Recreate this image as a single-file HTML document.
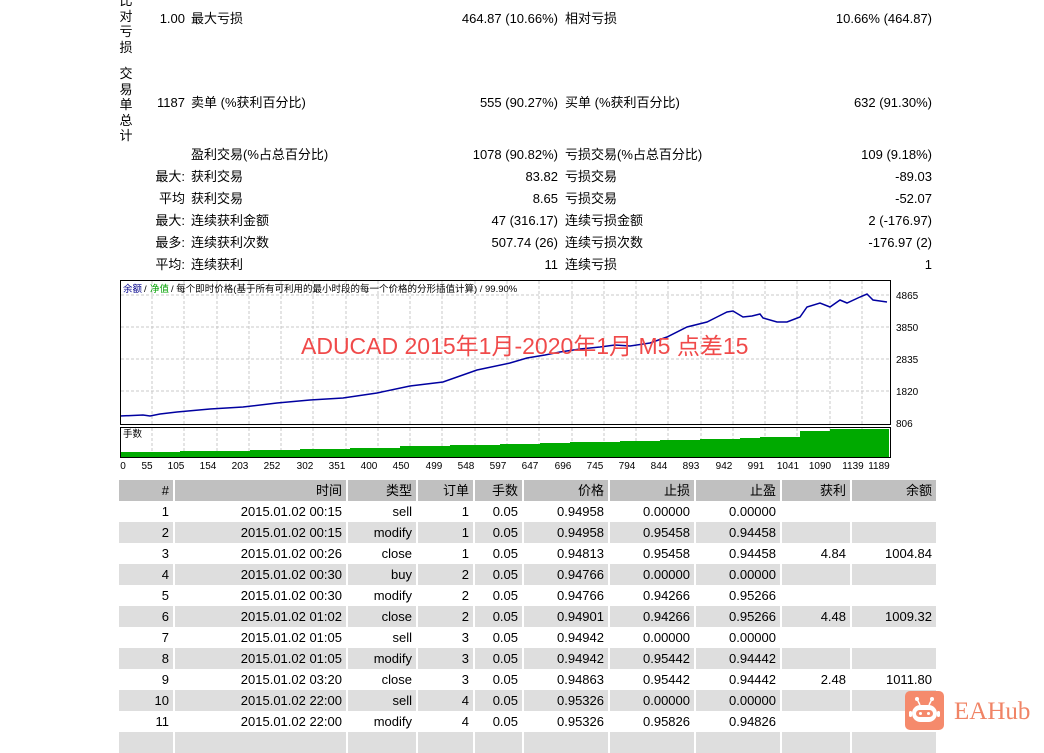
<!DOCTYPE html>
<html><head><meta charset="utf-8"><style>
body{margin:0;width:1044px;height:737px;background:#fff;overflow:hidden;position:relative;font-family:"Liberation Sans","Noto Sans CJK SC",sans-serif;font-size:13px;color:#000}
.a{position:absolute;white-space:nowrap;line-height:14px}
.r{text-align:right}
.v{position:absolute;left:118px;width:16px;line-height:15.5px;font-size:13px;text-align:center}
table{position:absolute;left:117px;top:480px;border-collapse:separate;border-spacing:2px 0;font-size:13px}
td{height:21px;padding:0 4px;text-align:right;white-space:nowrap;line-height:21px}
tr.h td{background:#c0c0c0}
tr.g td{background:#dedede}
</style></head><body>
<div class="v" style="top:-7px">比<br>对<br>亏<br>损</div>
<div class="v" style="top:66px">交<br>易<br>单<br>总<br>计</div>

<div class="a r" style="top:12px;left:130px;width:55px">1.00</div><div class="a" style="top:12px;left:191px">最大亏损</div>
<div class="a r" style="top:12px;left:400px;width:158px">464.87 (10.66%)</div><div class="a" style="top:12px;left:565px">相对亏损</div>
<div class="a r" style="top:12px;left:780px;width:152px">10.66% (464.87)</div>

<div class="a r" style="top:96px;left:130px;width:55px">1187</div><div class="a" style="top:96px;left:191px">卖单 (%获利百分比)</div>
<div class="a r" style="top:96px;left:400px;width:158px">555 (90.27%)</div><div class="a" style="top:96px;left:565px">买单 (%获利百分比)</div>
<div class="a r" style="top:96px;left:780px;width:152px">632 (91.30%)</div>

<div class="a" style="top:148px;left:191px">盈利交易(%占总百分比)</div>
<div class="a r" style="top:148px;left:400px;width:158px">1078 (90.82%)</div><div class="a" style="top:148px;left:565px">亏损交易(%占总百分比)</div>
<div class="a r" style="top:148px;left:780px;width:152px">109 (9.18%)</div>

<div class="a r" style="top:170px;left:130px;width:55px">最大:</div><div class="a" style="top:170px;left:191px">获利交易</div>
<div class="a r" style="top:170px;left:400px;width:158px">83.82</div><div class="a" style="top:170px;left:565px">亏损交易</div>
<div class="a r" style="top:170px;left:780px;width:152px">-89.03</div>

<div class="a r" style="top:192px;left:130px;width:55px">平均</div><div class="a" style="top:192px;left:191px">获利交易</div>
<div class="a r" style="top:192px;left:400px;width:158px">8.65</div><div class="a" style="top:192px;left:565px">亏损交易</div>
<div class="a r" style="top:192px;left:780px;width:152px">-52.07</div>

<div class="a r" style="top:214px;left:130px;width:55px">最大:</div><div class="a" style="top:214px;left:191px">连续获利金额</div>
<div class="a r" style="top:214px;left:400px;width:158px">47 (316.17)</div><div class="a" style="top:214px;left:565px">连续亏损金额</div>
<div class="a r" style="top:214px;left:780px;width:152px">2 (-176.97)</div>

<div class="a r" style="top:236px;left:130px;width:55px">最多:</div><div class="a" style="top:236px;left:191px">连续获利次数</div>
<div class="a r" style="top:236px;left:400px;width:158px">507.74 (26)</div><div class="a" style="top:236px;left:565px">连续亏损次数</div>
<div class="a r" style="top:236px;left:780px;width:152px">-176.97 (2)</div>

<div class="a r" style="top:258px;left:130px;width:55px">平均:</div><div class="a" style="top:258px;left:191px">连续获利</div>
<div class="a r" style="top:258px;left:400px;width:158px">11</div><div class="a" style="top:258px;left:565px">连续亏损</div>
<div class="a r" style="top:258px;left:780px;width:152px">1</div>

<svg style="position:absolute;left:0;top:0" width="1044" height="480" font-family="Liberation Sans, Noto Sans CJK SC, sans-serif" font-size="9.5">
<g stroke="#c8c8c8" stroke-dasharray="3,2" stroke-width="1">
<path d="M121 295H890M121 327H890M121 359H890M121 391H890"/>
<path d="M152 281V424M184 281V424M217 281V424M249 281V424M281 281V424M313 281V424M346 281V424M378 281V424M410 281V424M442 281V424M475 281V424M507 281V424M539 281V424M572 281V424M604 281V424M636 281V424M668 281V424M701 281V424M733 281V424M765 281V424M797 281V424M830 281V424M862 281V424"/>
<path d="M152 428V457M184 428V457M217 428V457M249 428V457M281 428V457M313 428V457M346 428V457M378 428V457M410 428V457M442 428V457M475 428V457M507 428V457M539 428V457M572 428V457M604 428V457M636 428V457M668 428V457M701 428V457M733 428V457M765 428V457M797 428V457M830 428V457M862 428V457"/>
</g>
<polygon fill="#00aa00" points="121,457 121,452 180,452 180,451 250,451 250,450 300,450 300,449 350,449 350,448 400,448 400,446 450,446 450,445 500,445 500,444 540,444 540,443 570,443 570,442 620,442 620,441 660,441 660,440 700,440 700,439 740,439 740,438 760,438 760,437 800,437 800,431 830,431 830,429 889,429 889,457"/>
<polyline fill="none" stroke="#0000a0" stroke-width="1.5" points="120,416 143,415 150,416 160,414 177,412 210,409 243,407 277,403 310,400 343,398 377,393 410,386 443,382 477,370 510,363 527,358 545,355 560,352 580,349 600,347 615,345 630,346 650,343 667,337 687,327 707,322 717,317 727,312 733,311 743,317 752,316 760,314 763,318 777,322 787,322 800,317 807,307 820,303 830,307 840,300 847,303 860,297 867,294 873,300 880,301 887,302"/>
<rect x="120.5" y="280.5" width="770" height="144" fill="none" stroke="#000"/>
<rect x="120.5" y="427.5" width="770" height="30" fill="none" stroke="#000"/>
<text x="123" y="292" fill="#00008b">余额</text><text x="144" y="292">/</text><text x="150" y="292" fill="#00a000">净值</text><text x="171" y="292">/ 每个即时价格(基于所有可利用的最小时段的每一个价格的分形插值计算) / 99.90%</text>
<text x="123" y="437">手数</text>
<g font-size="10"><text x="896" y="299">4865</text><text x="896" y="331">3850</text><text x="896" y="363">2835</text><text x="896" y="395">1820</text><text x="896" y="427">806</text></g>
<g font-size="10" text-anchor="middle">
<text x="123" y="469">0</text><text x="147" y="469">55</text><text x="176" y="469">105</text><text x="208" y="469">154</text><text x="240" y="469">203</text><text x="272" y="469">252</text><text x="305" y="469">302</text><text x="337" y="469">351</text><text x="369" y="469">400</text><text x="401" y="469">450</text><text x="434" y="469">499</text><text x="466" y="469">548</text><text x="498" y="469">597</text><text x="530" y="469">647</text><text x="563" y="469">696</text><text x="595" y="469">745</text><text x="627" y="469">794</text><text x="659" y="469">844</text><text x="691" y="469">893</text><text x="724" y="469">942</text><text x="756" y="469">991</text><text x="788" y="469">1041</text><text x="820" y="469">1090</text><text x="853" y="469">1139</text><text x="879" y="469">1189</text>
</g>
<text x="301" y="354" font-size="23" fill="#f04a4a">ADUCAD 2015年1月-2020年1月 M5 点差15</text>
</svg>

<table>
<tr class="h"><td style="width:46px">#</td><td style="width:163px">时间</td><td style="width:60px">类型</td><td style="width:47px">订单</td><td style="width:39px">手数</td><td style="width:76px">价格</td><td style="width:76px">止损</td><td style="width:76px">止盈</td><td style="width:60px">获利</td><td style="width:76px">余额</td></tr>
<tr><td>1</td><td>2015.01.02 00:15</td><td>sell</td><td>1</td><td>0.05</td><td>0.94958</td><td>0.00000</td><td>0.00000</td><td></td><td></td></tr>
<tr class="g"><td>2</td><td>2015.01.02 00:15</td><td>modify</td><td>1</td><td>0.05</td><td>0.94958</td><td>0.95458</td><td>0.94458</td><td></td><td></td></tr>
<tr><td>3</td><td>2015.01.02 00:26</td><td>close</td><td>1</td><td>0.05</td><td>0.94813</td><td>0.95458</td><td>0.94458</td><td>4.84</td><td>1004.84</td></tr>
<tr class="g"><td>4</td><td>2015.01.02 00:30</td><td>buy</td><td>2</td><td>0.05</td><td>0.94766</td><td>0.00000</td><td>0.00000</td><td></td><td></td></tr>
<tr><td>5</td><td>2015.01.02 00:30</td><td>modify</td><td>2</td><td>0.05</td><td>0.94766</td><td>0.94266</td><td>0.95266</td><td></td><td></td></tr>
<tr class="g"><td>6</td><td>2015.01.02 01:02</td><td>close</td><td>2</td><td>0.05</td><td>0.94901</td><td>0.94266</td><td>0.95266</td><td>4.48</td><td>1009.32</td></tr>
<tr><td>7</td><td>2015.01.02 01:05</td><td>sell</td><td>3</td><td>0.05</td><td>0.94942</td><td>0.00000</td><td>0.00000</td><td></td><td></td></tr>
<tr class="g"><td>8</td><td>2015.01.02 01:05</td><td>modify</td><td>3</td><td>0.05</td><td>0.94942</td><td>0.95442</td><td>0.94442</td><td></td><td></td></tr>
<tr><td>9</td><td>2015.01.02 03:20</td><td>close</td><td>3</td><td>0.05</td><td>0.94863</td><td>0.95442</td><td>0.94442</td><td>2.48</td><td>1011.80</td></tr>
<tr class="g"><td>10</td><td>2015.01.02 22:00</td><td>sell</td><td>4</td><td>0.05</td><td>0.95326</td><td>0.00000</td><td>0.00000</td><td></td><td></td></tr>
<tr><td>11</td><td>2015.01.02 22:00</td><td>modify</td><td>4</td><td>0.05</td><td>0.95326</td><td>0.95826</td><td>0.94826</td><td></td><td></td></tr>
<tr class="g"><td></td><td></td><td></td><td></td><td></td><td></td><td></td><td></td><td></td><td></td></tr>
</table>

<svg style="position:absolute;left:905px;top:691px" width="40" height="40" viewBox="0 0 40 40">
<rect width="39" height="39" rx="5" fill="#f58a6c"/>
<circle cx="12" cy="8" r="2" fill="#fff"/><circle cx="27" cy="8" r="2" fill="#fff"/>
<path d="M12 8L15 14M27 8L24 14" stroke="#fff" stroke-width="1.5"/>
<rect x="7" y="14" width="25" height="17" rx="8.5" fill="#fff"/>
<rect x="4" y="20" width="3" height="6" rx="1.5" fill="#fff"/><rect x="32" y="20" width="3" height="6" rx="1.5" fill="#fff"/>
<rect x="11" y="19" width="17" height="7" rx="3.5" fill="#f58a6c"/>
<circle cx="15.5" cy="22.5" r="1.5" fill="#fff"/><circle cx="23.5" cy="22.5" r="1.5" fill="#fff"/>
</svg>
<div class="a" style="left:954px;top:698px;font-family:'Liberation Serif',serif;font-size:25px;line-height:28px;color:#f08466">EAHub</div>
</body></html>
